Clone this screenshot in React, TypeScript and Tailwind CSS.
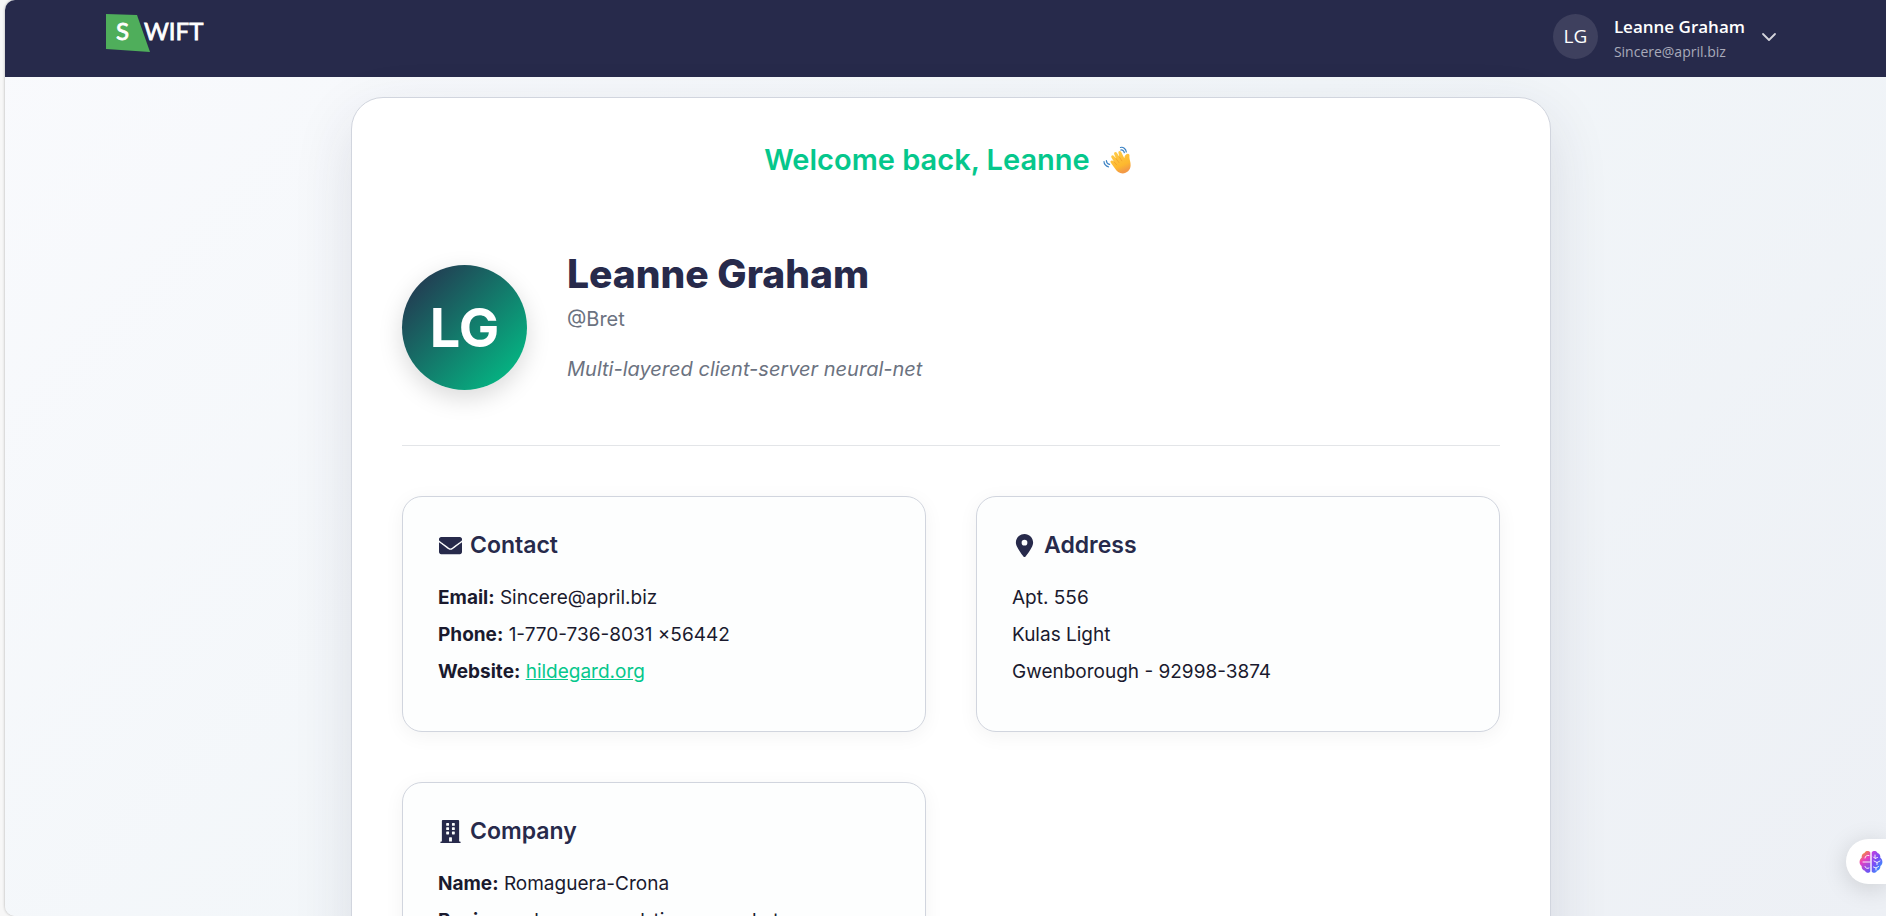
import { FaEnvelope, FaBuilding } from "react-icons/fa";
import { FaLocationDot } from "react-icons/fa6";
import type { ReactNode } from "react";

function Logo() {
  return (
    <a href="#" aria-label="Swift" className="block">
      <svg width="100" height="40" viewBox="0 0 100 40" className="block">
        <path d="M0 0 L31 1 L44 38 L0 35 Z" fill="#4fae5b" />
        <g fill="#fff" stroke="#fff" strokeWidth="0.8" fontFamily="Lato, sans-serif" fontWeight="400" fontSize="24">
          <text x="10" y="26">S</text>
          <text x="38" y="26">WIFT</text>
        </g>
      </svg>
    </a>
  );
}

function Wave() {
  return (
    <svg width="30" height="30" viewBox="0 0 30 30" role="img" aria-label="waving hand">
      <defs>
        <linearGradient id="hand" x1="0" y1="0" x2="0.4" y2="1">
          <stop offset="0" stopColor="#ffcf4d" />
          <stop offset="0.75" stopColor="#fdb82e" />
          <stop offset="1" stopColor="#f39a45" />
        </linearGradient>
      </defs>
      <path
        d="M9 18 C7.5 16.3 9.3 14.7 10.8 15.8 L12 16.8 L9.4 12.4 C8.5 10.5 10.7 9.3 12 11 L14 13.6 L12.2 9.2 C11.5 7.2 14 6.2 15 8 L17.3 11.8 L16.4 7.8 C16 5.8 18.4 5.2 19.2 7 L22.3 13.2 C22.5 10.8 23.8 8.5 26 8.7 C28 9 27.4 10.5 27.4 12 C27.4 15 28.8 17 28.6 20.5 C28.4 25 24.9 28.4 20.7 28.4 C17.5 28.4 14.5 26.5 12.6 23 Z"
        fill="url(#hand)"
      />
      <path d="M12 16.8 l2.6 3 M14 13.6 l3 4 M17.3 11.8 l2.5 4" stroke="#f0a02c" strokeWidth="0.8" fill="none" strokeLinecap="round" />
      <path d="M18.5 2.5 C21 1.5 24 4 24.3 7 M18.8 5 C20.5 4.500 22 6 22.3 7.6 M2 16.5 C2 19 4 21.5 6.5 21.8 M4.4 15.7 C4.5 17.5 5.8 19 7.6 19.4" stroke="#3b82c4" strokeWidth="1.2" fill="none" strokeLinecap="round" />
    </svg>
  );
}

function Brain() {
  return (
    <svg width="24" height="24" viewBox="0 0 24 24" className="shrink-0">
      <defs>
        <linearGradient id="brainL" x1="0.3" y1="0" x2="0.7" y2="1">
          <stop offset="0" stopColor="#f59a23" />
          <stop offset="0.4" stopColor="#e83fc0" />
          <stop offset="1" stopColor="#6a55f5" />
        </linearGradient>
        <linearGradient id="brainR" x1="0" y1="0" x2="0.7" y2="1">
          <stop offset="0" stopColor="#c83fe0" />
          <stop offset="0.5" stopColor="#7a4df5" />
          <stop offset="1" stopColor="#2f9bff" />
        </linearGradient>
      </defs>
      <path d="M11.3 2.5 C10 0.5 6.5 0.6 5.5 3 C3.5 3.500 2.3 5.5 2.8 7.5 C0 9.500 -0.2 14 2.6 16 C2.5 18.5 4 20.5 6 20.8 C7 23.3 10.3 23.4 11.3 21.5 Z" fill="url(#brainL)" />
      <path d="M12.7 2.5 C14 0.5 17.5 0.6 18.5 3 C20.5 3.5 21.7 5.5 21.2 7.5 C24 9.5 24.2 14 21.4 16 C21.5 18.5 20 20.5 18 20.8 C17 23.3 13.7 23.4 12.7 21.5 Z" fill="url(#brainR)" />
      <path d="M11 12 H4 M6 8 C6 6 8 5 10 5.5 M6 16.5 C6.5 18.5 8.5 18.7 10 18 M16 5 V8 M14.5 7 L16 8.5 L18.5 7.5 M15 11 L18 12.5 L21 11 M18 12.5 V14.5 M14.5 17 L17 18 L19.5 16.5 M17 18 V20" stroke="#fff" strokeWidth="0.9" fill="none" strokeLinecap="round" />
    </svg>
  );
}

function InfoCard({ icon, title, children }: { icon: ReactNode; title: string; children: ReactNode }) {
  return (
    <section className="rounded-[20px] border border-[#d1d5de] bg-[#fdfefe] px-[35px] pt-[30px] pb-[41px] shadow-[0_4px_20px_rgba(0,0,0,0.05)]">
      <h2 className="mb-4 flex items-center gap-2 text-[23px] leading-9 font-semibold text-[#272a4b]">
        <span className="flex w-6 justify-center text-[23px]">{icon}</span>
        {title}
      </h2>
      <div className="text-[19px] leading-[37px] text-[#1a1a2e]">{children}</div>
    </section>
  );
}

export default function App() {
  return (
    <div className="h-screen overflow-hidden bg-[#f7f7f7] pl-[5px] font-['Inter',sans-serif]">
      <div className="h-full overflow-hidden rounded-l-[10px] bg-[linear-gradient(135deg,#f9fafd,#f2f6f9_50%,#edf0f5)] shadow-[0_0_3px_rgba(0,0,0,0.3)]">
        <header className="flex h-[77px] items-start justify-between bg-[#272a4b] pt-[14px] pr-[109px] pl-[101px] font-['Open_Sans',sans-serif]">
          <Logo />
          <button type="button" className="flex items-start text-left text-white">
            <span className="flex size-[45px] items-center justify-center rounded-full bg-[#3e405e] text-[19px]">LG</span>
            <span className="ml-4 flex flex-col">
              <span className="text-[17px] leading-[26px] font-semibold">Leanne Graham</span>
              <span className="text-[14px] leading-6 text-[#a9aaba]">Sincere@april.biz</span>
            </span>
            <svg width="16" height="16" viewBox="0 0 16 16" className="mt-[15px] ml-4">
              <path d="M2 5 L8 11 L14 5" fill="none" stroke="#d4d4dc" strokeWidth="1.8" strokeLinecap="round" strokeLinejoin="round" />
            </svg>
          </button>
        </header>

        <main className="pt-5 pl-[11px]">
          <article className="mx-auto max-w-[1200px] rounded-[32px] border border-[#d1d5de] bg-white px-[50px] pt-10 pb-[50px] shadow-[0_20px_60px_rgba(39,42,75,0.12)]">
            <h2 className="flex items-center justify-center gap-3 pr-[6px] text-[29px] leading-[44px] font-semibold text-[#05c78c]">
              Welcome back, Leanne
              <Wave />
            </h2>

            <div className="mt-[68px] flex items-center gap-10 border-b border-[#e3e5e8] pb-10">
              <div className="flex size-[125px] items-center justify-center rounded-full bg-[linear-gradient(135deg,#272a4b,#00c78a)] text-[54px] font-bold text-white shadow-[0_8px_24px_rgba(0,0,0,0.15)]">
                LG
              </div>
              <div className="pb-5">
                <h1 className="text-[39px] leading-[48px] font-extrabold text-[#272a4b]">Leanne Graham</h1>
                <p className="mt-[5px] text-[20px] leading-8 text-[#6b7280]">@Bret</p>
                <p className="mt-[18px] text-[20px] leading-8 text-[#6b7280] italic">Multi-layered client-server neural-net</p>
              </div>
            </div>

            <div className="mt-[50px] grid grid-cols-2 gap-[50px]">
              <InfoCard icon={<FaEnvelope />} title="Contact">
                <p><strong className="font-bold">Email:</strong> Sincere@april.biz</p>
                <p><strong className="font-bold">Phone:</strong> 1-770-736-8031 x56442</p>
                <p>
                  <strong className="font-bold">Website:</strong>{" "}
                  <a href="#" className="text-[#05c78c] underline">hildegard.org</a>
                </p>
              </InfoCard>
              <InfoCard icon={<FaLocationDot />} title="Address">
                <p>Apt. 556</p>
                <p>Kulas Light</p>
                <p>Gwenborough - 92998-3874</p>
              </InfoCard>
              <InfoCard icon={<FaBuilding />} title="Company">
                <p><strong className="font-bold">Name:</strong> Romaguera-Crona</p>
                <p><strong className="font-bold">Business:</strong> harness real-time e-markets</p>
              </InfoCard>
            </div>
          </article>
        </main>
      </div>

      <button type="button" aria-label="Assistant" className="fixed right-0 bottom-8 flex h-[45px] w-10 items-center rounded-l-full bg-white pl-[13px] shadow-[0_4px_24px_rgba(0,0,0,0.15)]">
        <Brain />
      </button>
    </div>
  );
}
